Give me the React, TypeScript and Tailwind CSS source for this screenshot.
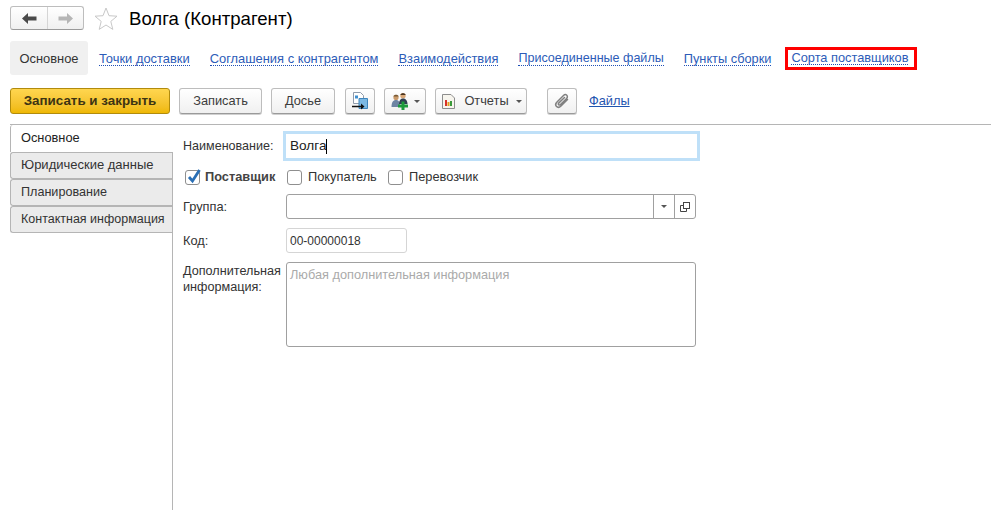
import type { ReactNode } from "react";

const FONT = "font-['Liberation_Sans',Arial,sans-serif]";

const LINKS = [
  { label: "Точки доставки", cls: "ml-[11px] text-[12.9px]" },
  { label: "Соглашения с контрагентом", cls: "ml-5 text-[12.9px]" },
  { label: "Взаимодействия", cls: "ml-5 text-[12.9px]" },
  { label: "Присоединенные файлы", cls: "ml-5 text-[12.55px]" },
  { label: "Пункты сборки", cls: "ml-5 text-[12.8px]" },
];

const SIDE_TABS = [
  { label: "Юридические данные", cls: "text-[13px]" },
  { label: "Планирование", cls: "text-[12.6px]" },
  { label: "Контактная информация", cls: "text-[12.5px]" },
];

const BTN =
  "flex h-[26px] items-center justify-center rounded-[3px] border border-[#bdbdbd] border-b-[#9a9a9a] bg-gradient-to-b from-white to-[#f0f0f0] text-[12.8px] text-[#3c3c3c] shadow-[0_1px_0_#d0d0d0]";

function Caret() {
  return <span className="inline-block h-0 w-0 border-x-[3px] border-t-[3px] border-x-transparent border-t-[#555]" />;
}

function PersonsIcon() {
  return (
    <svg width="18" height="18" viewBox="0 0 18 18">
      <circle cx="5" cy="5.500" r="2.600" fill="#c99a6b" />
      <path d="M2.300 4.500c.5-2.400 5-2.400 5.400 0z" fill="#7a5a34" />
      <path d="M.5 15c0-4.500 1.500-7 4.500-7s4 2 4 7z" fill="#6d84a3" />
      <circle cx="12" cy="3.800" r="2.700" fill="#d9a878" />
      <path d="M9.300 3c.6-2.400 4.800-2.400 5.400 0z" fill="#4a3420" />
      <path d="M8 12c0-3.500 1.500-5.500 4-5.500s4.500 2 4.500 5.500z" fill="#2f3f52" />
      <path d="M10.500 9.500h3v3h3.500v3h-3.500v2.500h-3v-2.500H7v-3h3.500z" fill="#1d9a3c" />
    </svg>
  );
}

function ExportIcon() {
  return (
    <svg width="18" height="18" viewBox="0 0 18 18">
      <path d="M2.500.5h7l3 3v8h-10z" fill="#fff" stroke="#8f9bab" />
      <rect x="4" y="3.500" width="3" height="3" fill="#3f8fd0" />
      <path d="M8 6.500h8.500v10H8z" fill="#7cb9e4" stroke="#3f86bd" />
      <path d="M1 14.500h11" stroke="#111" strokeWidth="1.500" />
      <path d="M10 11.500l3.500 3-3.500 3z" fill="#111" />
    </svg>
  );
}

function ReportIcon() {
  return (
    <svg width="13" height="15" viewBox="0 0 13 15">
      <path d="M.5.5h8.500l3.500 3.500v10.500H.5z" fill="#f7f5ee" stroke="#8d8d8d" />
      <rect x="3" y="6" width="2" height="6" fill="#d8322a" />
      <rect x="5.500" y="8" width="2" height="4" fill="#e0a020" />
      <rect x="8" y="7" width="2" height="5" fill="#3a9a3a" />
    </svg>
  );
}

function ClipIcon() {
  return (
    <svg width="16" height="16" viewBox="0 0 16 16" fill="none" stroke="#808080" strokeWidth="1.500" strokeLinecap="round">
      <path d="M13.500 6.500 7 13c-1.500 1.500-3.500 1.500-4.500.5s-1-3 .5-4.500l6.500-6.500c1-1 2.500-1 3.300-.2s.8 2.200-.2 3.200L6.500 11.500c-.6.600-1.400.6-1.800.2s-.4-1.200.2-1.800L10.500 4.500" />
    </svg>
  );
}

function CheckBox({ checked }: { checked?: boolean }) {
  return (
    <span className="relative block h-[15px] w-[15px] shrink-0 rounded-[3px] border border-[#8f8f8f] bg-white">
      {checked && (
        <svg className="absolute left-[1px] top-[-3px]" width="15" height="16" viewBox="0 0 15 16" fill="none">
          <path d="M2 9l3.500 4L12.500 2" stroke="#2a6fb5" strokeWidth="2.800" />
        </svg>
      )}
    </span>
  );
}

function Row({ className, label, children }: { className: string; label: ReactNode; children: ReactNode }) {
  return (
    <div className={`flex ${className}`}>
      <span className="w-[103px] shrink-0">{label}</span>
      {children}
    </div>
  );
}

export default function App() {
  return (
    <div className={`${FONT} h-[510px] w-[991px] overflow-hidden bg-white text-[12.8px] text-[#333]`}>
      {/* Title bar */}
      <div className="flex h-[41px] items-start pl-[10px] pt-[6px]">
        <div className="flex h-6 w-[74px] rounded-[3px] border border-[#bdbdbd] border-b-[#9a9a9a] bg-gradient-to-b from-white to-[#f0f0f0]">
          <div className="flex w-[37px] items-center justify-center border-r border-[#d5d5d5]">
            <svg width="15" height="11" viewBox="0 0 15 11"><path d="M0 5.500 6 0v3.500h8.500v4H6V11z" fill="#4a4a4a" /></svg>
          </div>
          <div className="flex flex-1 items-center justify-center">
            <svg width="15" height="11" viewBox="0 0 15 11"><path d="M15 5.500 9 0v3.500H.5v4H9V11z" fill="#b5b5b5" /></svg>
          </div>
        </div>
        <svg className="ml-[10px] mt-[1px]" width="24" height="23" viewBox="0 0 24 23" fill="#fff" stroke="#c8c8c8">
          <path d="M12 1l3 7.700 8 .5-6.200 5.200 2 8L12 18l-6.800 4.400 2-8L1 9.200l8-.5z" />
        </svg>
        <span className="ml-[11px] mt-[3px] text-[18.6px] leading-5 text-black">Волга (Контрагент)</span>
      </div>

      {/* Section links */}
      <div className="ml-[10px] flex h-[34px] items-center">
        <div className="flex h-[34px] w-[78px] items-center justify-center rounded-[3px] bg-[#f0f0f0] pt-[1px] text-[12.9px] text-[#333]">Основное</div>
        {LINKS.map((l) => (
          <span key={l.label} className={`${l.cls} mt-[1px] border-b border-dotted border-[#1f4fb5] leading-[13px] text-[#2d5cb8]`}>
            {l.label}
          </span>
        ))}
        <div className="ml-[14px] flex h-[23px] w-[132px] items-center border-[3px] border-[#ff0000] pl-[3px]">
          <span className="border-b border-dotted border-[#1f4fb5] leading-[13px] text-[#2d5cb8]">Сорта поставщиков</span>
        </div>
      </div>

      {/* Command bar */}
      <div className="ml-[10px] mt-[13px] flex h-[26px] items-center">
        <div className="flex h-[26px] w-[160px] items-center justify-center rounded-[3px] border border-[#b18b0d] bg-gradient-to-b from-[#ffd64f] to-[#efb800] text-[13.4px] font-bold text-[#3d3413]">
          Записать и закрыть
        </div>
        <div className={`${BTN} ml-[9px] w-[83px]`}>Записать</div>
        <div className={`${BTN} ml-[9px] w-[64px]`}>Досье</div>
        <div className={`${BTN} ml-[10px] w-[30px]`}><ExportIcon /></div>
        <div className={`${BTN} ml-[9px] w-[42px] gap-[5px]`}><PersonsIcon /><Caret /></div>
        <div className={`${BTN} ml-[9px] w-[92px]`}>
          <span className="ml-[2px] flex"><ReportIcon /></span>
          <span className="ml-[9px]">Отчеты</span>
          <span className="ml-[7px] flex"><Caret /></span>
        </div>
        <div className={`${BTN} ml-5 w-[30px]`}><ClipIcon /></div>
        <span className="ml-3 text-[#1f55b0] underline">Файлы</span>
      </div>

      {/* Body */}
      <div className="ml-[10px] mt-[10px] flex h-[386px] border-t border-[#b5b5b5]">
        <div className="flex w-[162px] shrink-0 flex-col">
          <div className="h-[27px] rounded-tl-[3px] border-l border-[#b5b5b5] bg-white pl-[10px] pt-[3px] text-[#222]">Основное</div>
          {SIDE_TABS.map((t) => (
            <div key={t.label} className={`${t.cls} flex h-[27px] items-center rounded-l-[3px] border border-r-0 border-[#b5b5b5] bg-[#ebebeb] pb-[1px] pl-[10px] text-[#333]`}>
              {t.label}
            </div>
          ))}
        </div>

        <div className="relative flex-1 pl-[11px]">
          <div className="absolute left-0 top-[27px] h-[360px] w-px bg-[#b5b5b5]" />

          <div className="mt-[6px] flex h-[30px] items-center">
            <span className="w-[100px] shrink-0 text-[12.55px]">Наименование:</span>
            <div className="flex h-[30px] w-[417px] items-center border-[3px] border-[#bfe0f8] pl-1 text-[13.6px] text-[#222]">
              Волга<span className="h-[15px] w-px bg-black" />
            </div>
          </div>

          <div className="mt-[8px] flex h-[16px] items-center">
            <span className="ml-[2px]"><CheckBox checked /></span>
            <span className="ml-[5px] w-[82px] font-bold text-[#444]">Поставщик</span>
            <CheckBox />
            <span className="ml-[6px] w-[80px]">Покупатель</span>
            <CheckBox />
            <span className="ml-[6px]">Перевозчик</span>
          </div>

          <Row className="mt-[9px] h-[25px] items-center" label="Группа:">
            <div className="flex h-[25px] w-[410px] rounded-[3px] border border-[#a0a0a0]">
              <div className="flex-1" />
              <div className="flex w-[21px] items-center justify-center border-l border-[#a0a0a0]"><Caret /></div>
              <div className="flex w-[21px] items-center justify-center border-l border-[#a0a0a0]">
                <svg width="10" height="10" viewBox="0 0 10 10" fill="none" stroke="#444">
                  <rect x="3.500" y=".5" width="6" height="6" />
                  <path d="M3.500 3.500H.5v6h6V6.500" />
                </svg>
              </div>
            </div>
          </Row>

          <Row className="mt-[9px] h-[25px] items-center" label="Код:">
            <div className="flex h-[25px] w-[121px] items-center rounded-[3px] border border-[#d5d5d5] pl-[3px] text-xs text-[#333]">00-00000018</div>
          </Row>

          <Row
            className="mt-[9px]"
            label={<span className="block pt-[1px] text-[12.65px] leading-[16px]">Дополнительная<br />информация:</span>}
          >
            <div className="h-[85px] w-[410px] rounded-[3px] border border-[#a0a0a0] pl-[3px] pt-[2px] text-[12.75px] text-[#aaa]">
              Любая дополнительная информация
            </div>
          </Row>
        </div>
      </div>
    </div>
  );
}
